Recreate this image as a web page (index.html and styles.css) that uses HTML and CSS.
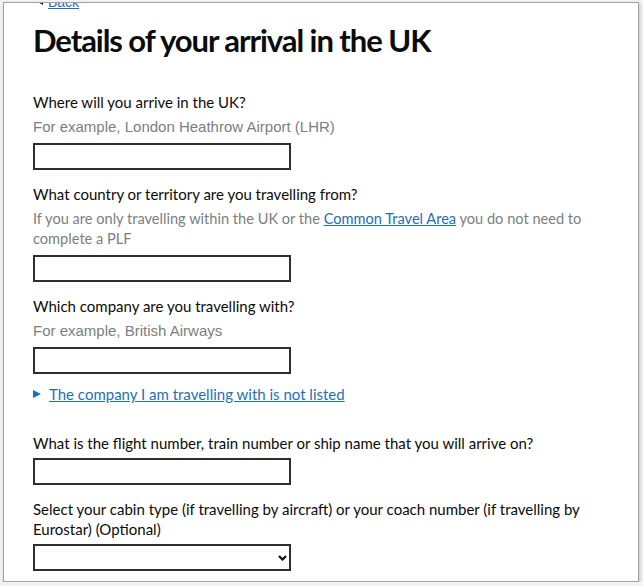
FILE: index.html
```html
<!DOCTYPE html>
<html lang="en">
<head>
    <meta charset="UTF-8">
    <meta name="viewport" content="width=device-width, initial-scale=1.0">
    <title>Details of your arrival in the UK</title>
    <link rel="stylesheet" href="styles.css">
</head>
<body>
    <div class="frame">
        <main class="page">
            <a href="#" class="back-link">Back</a>
            <h1 class="heading">Details of your arrival in the UK</h1>

            <div class="field">
                <label class="label" for="port">Where will you arrive in the UK?</label>
                <div class="hint hint-plain">For example, London Heathrow Airport (LHR)</div>
                <input class="input" type="text" id="port">
            </div>

            <div class="field">
                <label class="label" for="country">What country or territory are you travelling from?</label>
                <div class="hint">If you are only travelling within the UK or the <a href="#" class="link">Common Travel Area</a> you do not need to complete a PLF</div>
                <input class="input" type="text" id="country">
            </div>

            <div class="field">
                <label class="label" for="company">Which company are you travelling with?</label>
                <div class="hint hint-plain">For example, British Airways</div>
                <input class="input" type="text" id="company">
            </div>

            <details class="details">
                <summary class="summary"><span class="link">The company I am travelling with is not listed</span></summary>
            </details>

            <div class="field">
                <label class="label" for="flight">What is the flight number, train number or ship name that you will arrive on?</label>
                <input class="input" type="text" id="flight">
            </div>

            <div class="field">
                <label class="label" for="cabin">Select your cabin type (if travelling by aircraft) or your coach number (if travelling by Eurostar) (Optional)</label>
                <div class="select">
                    <select class="select-box" id="cabin">
                        <option></option>
                    </select>
                    <svg class="chevron" width="9" height="6" viewBox="0 0 9 6"><path d="M1 1 L4.5 4.5 L8 1" fill="none" stroke="#0b0c0c" stroke-width="2.2"/></svg>
                </div>
            </div>
        </main>
    </div>
</body>
</html>
```

FILE: styles.css
```css
body {
    margin: 0;
    background-color: #f3f3f3;
    font-family: "Liberation Sans", Arial, sans-serif;
    color: #0b0c0c;
}

.frame {
    margin: 2px 4px 0 3px;
    height: 578px;
    border: 1px solid #a3a3a3;
    background-color: #fff;
    box-shadow: 1px 2px 4px rgba(0, 0, 0, 0.2);
    overflow: hidden;
}

.page {
    padding: 0 29px;
    margin-top: -10px;
}

.back-link {
    display: inline-block;
    margin-left: 4px;
    padding-left: 11px;
    position: relative;
    font-size: 14px;
    line-height: 18px;
    color: #1d70b8;
}

.back-link::before {
    content: "";
    position: absolute;
    left: 1px;
    top: 6px;
    border-style: solid;
    border-width: 3px 5px 3px 0;
    border-color: transparent #0b0c0c transparent transparent;
}

.heading {
    font-family: Lato, "Liberation Sans", sans-serif;
    font-weight: 700;
    font-size: 31px;
    line-height: 36px;
    letter-spacing: -1.05px;
    margin: 11px 0 0;
}

.field {
    display: flex;
    flex-direction: column;
    align-items: flex-start;
    margin-top: 14px;
}

.field:first-of-type {
    margin-top: 34px;
}

.label {
    font-family: Lato, "Liberation Sans", sans-serif;
    font-size: 15px;
    line-height: 20px;
    margin-bottom: 5px;
}

.hint {
    font-family: Lato, "Liberation Sans", sans-serif;
    font-size: 14.6px;
    line-height: 20px;
    color: #7a7f82;
    margin-bottom: 6px;
}

.hint-plain {
    font-family: "Liberation Sans", Arial, sans-serif;
    font-size: 15px;
}

.link {
    color: #1d70b8;
    text-decoration: underline;
}

.input {
    box-sizing: border-box;
    width: 258px;
    height: 27px;
    margin: 0;
    border: 2px solid #2e2e2e;
    border-radius: 0;
    background: #fff;
}

.details {
    margin-top: 10px;
}

.summary {
    list-style: none;
    display: flex;
    align-items: center;
    gap: 8px;
    font-family: Lato, "Liberation Sans", sans-serif;
    font-size: 15px;
    line-height: 20px;
    cursor: pointer;
}

.summary::-webkit-details-marker {
    display: none;
}

.summary::before {
    content: "";
    border-style: solid;
    border-width: 4.5px 0 4.5px 8px;
    border-color: transparent transparent transparent #1d70b8;
}

.details + .field {
    margin-top: 29px;
}

.select {
    position: relative;
}

.select-box {
    box-sizing: border-box;
    width: 258px;
    height: 27px;
    border: 2px solid #2e2e2e;
    border-radius: 0;
    background: #fff;
    appearance: none;
}

.chevron {
    position: absolute;
    right: 4px;
    top: 11px;
}
```
